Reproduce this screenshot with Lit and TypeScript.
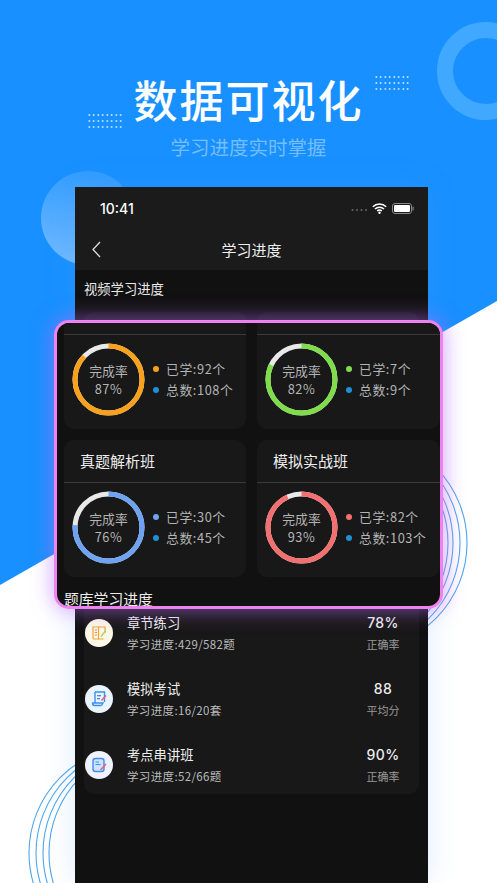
import { LitElement, html, css, svg, unsafeCSS } from "lit";
import { customElement } from "lit/decorators.js";

const CJK = unsafeCSS(`"Noto Sans CJK SC", "Noto Sans", sans-serif`);

const CLASSES = [
  { name: "", pct: 87, color: "#f9a11b", done: "92", total: "108", dot2: "#1f8fd6" },
  { name: "", pct: 82, color: "#7fdc4a", done: "7", total: "9", dot2: "#1f8fd6" },
  { name: "真题解析班", pct: 76, color: "#6ea3f2", done: "30", total: "45", dot2: "#1f8fd6" },
  { name: "模拟实战班", pct: 93, color: "#f47070", done: "82", total: "103", dot2: "#1f8fd6" },
];

const ICONS = [
  svg`<path d="M8 8h5.5v12H9a1 1 0 0 1-1-1z" fill="none" stroke="#f0a63a" stroke-width="1.2"/><path d="M13.5 8H20v6M13.5 20H18.5" fill="none" stroke="#f0a63a" stroke-width="1.2"/><path d="M9.8 11h2.2M9.8 13.500h2.2M9.8 16h2.2" stroke="#f08a4a" stroke-width="1"/><path d="M15.5 17l4.5-5.500 1 1-4.500 5.500z" fill="#a9d64a"/>`,
  svg`<path d="M10 7h9.5v10" fill="none" stroke="#3d8ff0" stroke-width="1.4"/><path d="M10 7v11" stroke="#3d8ff0" stroke-width="1.4"/><rect x="12" y="10" width="4" height="1.3" fill="#3d8ff0"/><rect x="12" y="13" width="3" height="1.3" fill="#3d8ff0"/><path d="M7.5 18h10.500c-.8 2-1.500 2.500-2 2.500H9.500c-1.300 0-2-1-2-2.500z" fill="none" stroke="#3d8ff0" stroke-width="1.4"/><path d="M16 15l4.500-5 1 1-4.500 5z" fill="#f0587a"/>`,
  svg`<rect x="8" y="7.5" width="11" height="13" rx="2.5" fill="#cfe2fb" stroke="#3d8ff0" stroke-width="1.4"/><path d="M10.5 11h3.5M10.5 13.500h5" stroke="#3d8ff0" stroke-width="1.2"/><path d="M15 18.500l5.500-6 1 1-5.500 6z" fill="#f0587a"/>`,
];

const ROWS = [
  { title: "章节练习", sub: "学习进度:429/582题", value: "78%", label: "正确率", bg: "#fdf7e8" },
  { title: "模拟考试", sub: "学习进度:16/20套", value: "88", label: "平均分", bg: "#e9f4ff" },
  { title: "考点串讲班", sub: "学习进度:52/66题", value: "90%", label: "正确率", bg: "#eff2fd" },
];

@customElement("app-root")
export class AppRoot extends LitElement {
  static styles = css`
    :host {
      display: block;
      position: relative;
      width: 497px;
      height: 883px;
      overflow: hidden;
      background: #1890ff;
      font-family: ${CJK};
    }
    .white {
      position: absolute;
      inset: 0;
      background: #fff;
      clip-path: polygon(0 585px, 497px 301px, 497px 883px, 0 883px);
    }
    .deco { position: absolute; left: 0; top: 0; width: 497px; height: 883px; }
    .dots {
      position: absolute;
      width: 36px;
      height: 18px;
      background-image: radial-gradient(circle, rgba(255,255,255,.8) .8px, transparent 1.1px);
      background-size: 4.5px 6px;
    }
    .dots.a { left: 374px; top: 74px; }
    .dots.b { left: 87px; top: 112px; }
    .page {
      position: relative;
      display: flex;
      flex-direction: column;
      align-items: center;
      height: 883px;
    }
    .title {
      margin: 68px 0 0 0;
      height: 62px;
      line-height: 62px;
      font-size: 44px;
      letter-spacing: 2px;
      font-weight: 500;
      color: #fff;
    }
    .subtitle {
      margin-top: 4px;
      height: 26px;
      line-height: 26px;
      font-size: 19.5px;
      color: #74bdff;
    }
    .phone {
      margin: 27px 0 0 6px;
      width: 353px;
      height: 696px;
      flex: none;
      background: #111;
      display: flex;
      flex-direction: column;
      color: #fff;
      box-shadow: 0 0 28px rgba(90, 160, 255, .2);
    }
    .top { background: #1b1b1b; height: 83px; display: flex; flex-direction: column; }
    .status {
      height: 42px;
      padding: 0 14px 0 25px;
      display: flex;
      align-items: center;
      justify-content: space-between;
    }
    .time { font: 500 14px "Inter", "Liberation Sans", sans-serif; color: #fff; }
    .sys { display: flex; align-items: center; gap: 5px; }
    .nav {
      position: relative;
      height: 41px;
      display: flex;
      align-items: center;
      justify-content: center;
      font-size: 15px;
      color: #eee;
    }
    .nav svg { position: absolute; left: 17px; top: 12px; }
    .sec {
      height: 37px;
      padding: 0 9px;
      display: flex;
      align-items: center;
      font-size: 13.3px;
      color: #e8e8e8;
    }
    .behind {
      height: 293px;
      box-sizing: border-box;
      padding: 5px 9px 0;
      display: grid;
      grid-template-columns: 1fr 1fr;
      gap: 10px;
      align-items: start;
    }
    .behind div { height: 40px; border-radius: 10px; background: #181818; }
    .list {
      margin: 0 9px;
      height: 194px;
      border-radius: 10px;
      background: #181818;
      display: grid;
      grid-auto-rows: 66px;
      padding: 0 6px 0 0;
      box-sizing: border-box;
    }
    .row {
      display: grid;
      grid-template-columns: 43px 1fr 60px;
      align-items: center;
    }
    .icon {
      width: 28px;
      height: 28px;
      border-radius: 50%;
      margin-left: 1px;
    }
    .icon svg { display: block; }
    .lt { font-size: 13.3px; line-height: 18px; color: #eee; }
    .ls { font-size: 11.5px; line-height: 16px; color: #bbb; margin-top: 4px; letter-spacing: .35px; }
    .right { text-align: center; }
    .rv { font: 500 14px/18px "Inter", ${CJK}; color: #eee; letter-spacing: .4px; }
    .rl { font-size: 11px; line-height: 16px; color: #999; margin-top: 4px; }
    .over {
      position: absolute;
      left: 54px;
      top: 320px;
      width: 389px;
      height: 289px;
      box-sizing: border-box;
      border: 3px solid #ee82ee;
      border-radius: 15px;
      background: #111;
      box-shadow: 0 0 20px 2px rgba(185, 110, 255, .55);
      overflow: hidden;
      color: #fff;
    }
    .grid {
      display: grid;
      grid-template-columns: 182px 183px;
      column-gap: 11px;
      margin-left: 7px;
      grid-template-rows: 106px 137px;
      row-gap: 11px;
    }
    .card {
      background: #181818;
      border-radius: 0 0 10px 10px;
      display: flex;
      flex-direction: column;
    }
    .card.full { border-radius: 10px; }
    .head {
      height: 43px;
      padding: 0 0 2px 16px;
      box-sizing: border-box;
      border-bottom: 1px solid #3a3a3a;
      display: flex;
      align-items: center;
      font-size: 15px;
      color: #eee;
    }
    .card:not(.full) .head { height: 12px; padding: 0; }
    .body { display: flex; align-items: center; padding: 8px 0 0 8px; gap: 8px; }
    .ring { position: relative; width: 73px; height: 73px; flex: none; }
    .ring svg { display: block; }
    .ringt {
      position: absolute;
      inset: 0;
      display: flex;
      flex-direction: column;
      align-items: center;
      justify-content: center;
      font-size: 12.8px;
      line-height: 18px;
      color: #b4b4b4;
    }
    .pct { letter-spacing: .5px; }
    .legend { display: flex; flex-direction: column; gap: 3px; font-size: 12.8px; line-height: 18px; color: #b4b4b4; letter-spacing: .6px; }
    .li { display: flex; align-items: center; gap: 7px; white-space: nowrap; }
    .dot { width: 6px; height: 6px; border-radius: 50%; flex: none; }
    .olabel {
      position: absolute;
      left: 7px;
      bottom: -3px;
      font-size: 14.8px;
      line-height: 20px;
      color: #eee;
    }
  `;

  private renderRing(pct: number, color: string) {
    const r = 33.5;
    const c = 2 * Math.PI * r;
    return html`<div class="ring">
      <svg width="73" height="73" viewBox="0 0 73 73">
        <circle cx="36.5" cy="36.5" r="${r}" fill="none" stroke="#e9e9e9" stroke-width="5"></circle>
        <circle cx="36.5" cy="36.5" r="${r}" fill="none" stroke="${color}" stroke-width="5"
          stroke-dasharray="${(c * pct) / 100} ${c}" transform="rotate(-90 36.5 36.5)"></circle>
      </svg>
      <div class="ringt"><span>完成率</span><span class="pct">${pct}%</span></div>
    </div>`;
  }

  render() {
    return html`
      <div class="white"></div>
      <svg class="deco" viewBox="0 0 497 883">
        <defs>
          <linearGradient id="ball" x1="0.6" y1="0" x2="0.4" y2="1">
            <stop offset="0" stop-color="#2f9bff"></stop>
            <stop offset="1" stop-color="#6fb9ff"></stop>
          </linearGradient>
        </defs>
        <circle cx="486" cy="71" r="41" fill="none" stroke="#40a9ff" stroke-width="16"></circle>
        <circle cx="88" cy="218" r="47" fill="url(#ball)"></circle>
        <g fill="none" stroke="#4ea5ee" stroke-width="1.1">
          <circle cx="360" cy="543" r="107"></circle>
          <circle cx="353" cy="543" r="107"></circle>
          <circle cx="346" cy="543" r="107"></circle>
          <circle cx="341" cy="543" r="107"></circle>
          <circle cx="136" cy="853" r="107"></circle>
          <circle cx="143" cy="853" r="107"></circle>
          <circle cx="150" cy="853" r="107"></circle>
          <circle cx="156" cy="853" r="107"></circle>
        </g>
      </svg>
      <div class="dots a"></div>
      <div class="dots b"></div>
      <div class="page">
        <div class="title">数据可视化</div>
        <div class="subtitle">学习进度实时掌握</div>
        <div class="phone">
          <div class="top">
            <div class="status">
              <span class="time">10:41</span>
              <span class="sys">
                <svg width="16" height="7" viewBox="0 0 16 7"><g fill="#666"><circle cx="1.5" cy="5" r="1"></circle><circle cx="6" cy="5" r="1"></circle><circle cx="10.5" cy="5" r="1"></circle><circle cx="15" cy="5" r="1"></circle></g></svg>
                <svg width="15" height="11" viewBox="0 0 15 11"><path d="M.8 3.8a9.5 9.5 0 0 1 13.4 0M3 6a6.4 6.4 0 0 1 9 0M5.2 8.1a3.2 3.2 0 0 1 4.6 0" fill="none" stroke="#fff" stroke-width="1.5"></path><circle cx="7.5" cy="9.8" r="1.2" fill="#fff"></circle></svg>
                <svg width="22" height="11" viewBox="0 0 22 11"><rect x=".5" y=".5" width="19" height="10" rx="2.5" fill="none" stroke="#888"></rect><rect x="2" y="2" width="16" height="7" rx="1.2" fill="#fff"></rect><rect x="20.5" y="3.5" width="1.2" height="4" rx=".6" fill="#888"></rect></svg>
              </span>
            </div>
            <div class="nav">
              <svg width="9" height="17" viewBox="0 0 9 17"><path d="M8 1 1 8.5 8 16" fill="none" stroke="#ddd" stroke-width="1.3"></path></svg>
              学习进度
            </div>
          </div>
          <div class="sec">视频学习进度</div>
          <div class="behind"><div></div><div></div></div>
          <div class="list">
            ${ROWS.map(
              (r, i) => html`<div class="row">
                <div class="icon" style="background:${r.bg}">
                  <svg width="28" height="28" viewBox="0 0 28 28">${ICONS[i]}</svg>
                </div>
                <div>
                  <div class="lt">${r.title}</div>
                  <div class="ls">${r.sub}</div>
                </div>
                <div class="right">
                  <div class="rv">${r.value}</div>
                  <div class="rl">${r.label}</div>
                </div>
              </div>`
            )}
          </div>
        </div>
      </div>
      <div class="over">
        <div class="grid">
          ${CLASSES.map(
            (c) => html`<div class="card ${c.name ? "full" : ""}">
              <div class="head">${c.name}</div>
              <div class="body">
                ${this.renderRing(c.pct, c.color)}
                <div class="legend">
                  <div class="li"><span class="dot" style="background:${c.color}"></span>已学:${c.done}个</div>
                  <div class="li"><span class="dot" style="background:${c.dot2}"></span>总数:${c.total}个</div>
                </div>
              </div>
            </div>`
          )}
        </div>
        <div class="olabel">题库学习进度</div>
      </div>
    `;
  }
}
